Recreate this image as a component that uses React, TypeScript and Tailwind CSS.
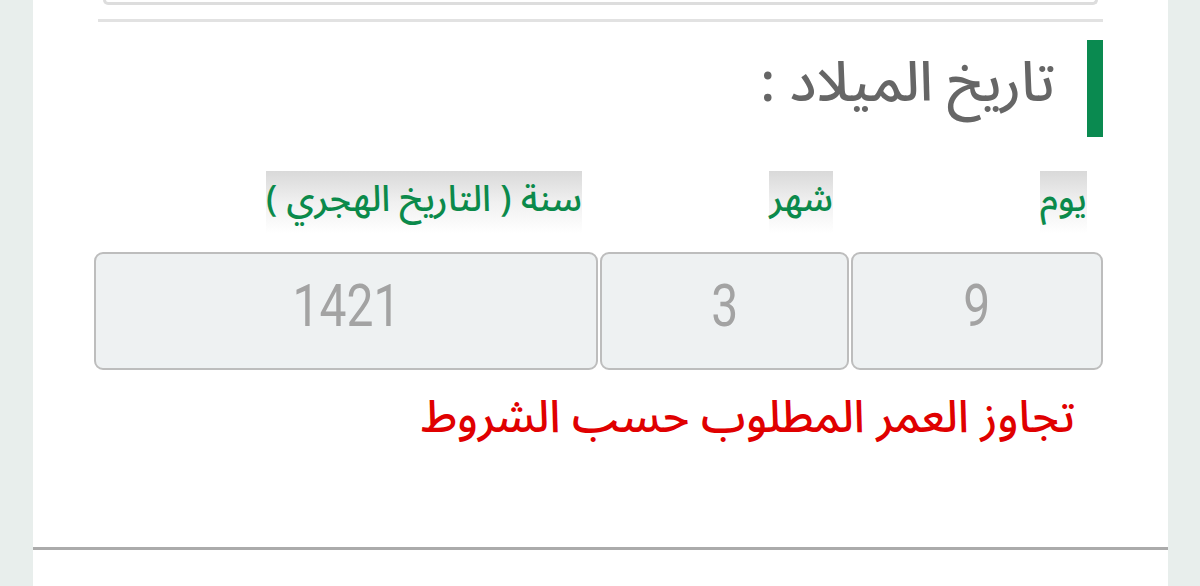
const arabic = { fontFamily: '"Noto Sans Arabic", "DejaVu Sans", sans-serif' };
const digits = { fontFamily: 'Roboto, "Liberation Sans", sans-serif' };

function DateField({ label, value, width }: { label: string; value: string; width: string }) {
    return (
        <div className={`flex flex-col ${width}`}>
            <div className="h-[62px] pr-[16px] flex">
                <div className="h-[62px] bg-gradient-to-b from-[#d9d9d9] via-[#f0f0f0] to-white flex items-center justify-center text-[36px] font-medium text-[#0b8a4b] pb-[4px]">
                    {label}
                </div>
            </div>
            <div className="h-[19px]" />
            <div className="h-[118px] rounded-[9px] border-2 border-[#bdbdbd] bg-[#eef1f2] flex items-center justify-center text-[#a3a3a3] pb-[10px]" style={digits}>
                <span className="inline-block text-[60px] scale-x-[0.8]">{value}</span>
            </div>
        </div>
    );
}

function App() {
    return (
        <div className="w-full h-[586px] bg-[#e8eeec] flex pl-[33px] pr-[32px] overflow-hidden" dir="rtl" style={arabic}>
            <div className="w-full h-full bg-white flex flex-col">
                <div className="mx-[70px] h-[5px] border-x-[3px] border-b-[3px] border-[#dddddd] rounded-b-[10px]" />
                <div className="mx-[65px] mt-[14px] h-[3px] bg-[#e2e2e2]" />

                <div className="mr-[65px] ml-[60px] flex flex-col">
                    <div className="mt-[18px] h-[97px] flex items-center">
                        <div className="w-[16px] h-full bg-[#0a8a50]" />
                        <h2 className="mr-[32px] text-[55px] font-medium text-[#666666] pb-[8px]">تاريخ الميلاد :</h2>
                    </div>

                    <div className="mt-[34px] flex gap-[2px]">
                        <DateField label="يوم" value="9" width="w-[252px]" />
                        <DateField label="شهر" value="3" width="w-[249px]" />
                        <DateField label="سنة ( التاريخ الهجري )" value="1421" width="w-[504px]" />
                    </div>

                    <p className="mt-[14px] mr-[28px] text-[45px] font-medium text-[#e00000]">تجاوز العمر المطلوب حسب الشروط</p>
                </div>

                <div className="mt-auto mb-[36px] h-[3px] bg-[#ababab]" />
            </div>
        </div>
    );
}

export default App;
